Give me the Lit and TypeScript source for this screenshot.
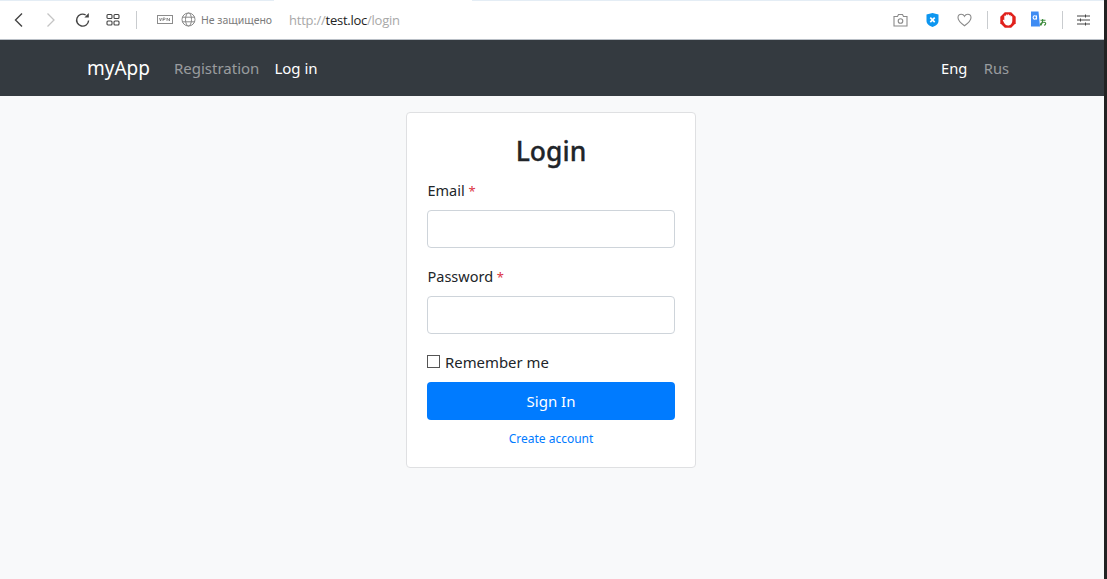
import { LitElement, html, css } from 'lit';
import { customElement } from 'lit/decorators.js';

@customElement('browser-bar')
class BrowserBar extends LitElement {
  static styles = css`
    :host {
      display: flex;
      align-items: center;
      height: 40px;
      box-sizing: border-box;
      background: #fff;
      border-bottom: 1px solid #b9bfc6;
      position: relative;
      font-family: "Noto Sans", sans-serif;
    }
    .tabline {
      position: absolute;
      left: 0;
      top: 0;
      right: 0;
      height: 1px;
      background: #e4edf5;
    }
    .tabgap {
      position: absolute;
      left: 274px;
      top: 0;
      width: 198px;
      height: 1px;
      background: #fff;
    }
    svg {
      display: block;
      flex: none;
    }
    .left {
      display: flex;
      align-items: center;
      padding-left: 10px;
    }
    .sep {
      width: 1px;
      height: 18px;
      background: #c9cccf;
      flex: none;
    }
    .secure {
      font-size: 10.5px;
      color: #7b7b7b;
      margin-left: 5px;
      white-space: nowrap;
    }
    .url {
      font-size: 13px;
      color: #a8a8a8;
      margin-left: 17px;
      white-space: nowrap;
      font-family: "Open Sans", sans-serif;
      letter-spacing: -0.25px;
    }
    .url b {
      font-weight: 400;
      color: #222;
    }
    .right {
      margin-left: auto;
      display: flex;
      align-items: center;
      padding-right: 14.5px;
    }
  `;

  render() {
    return html`
      <div class="tabline"></div>
      <div class="tabgap"></div>
      <div class="left">
        <svg width="16" height="16" viewBox="0 0 16 16" fill="none" stroke="#444" stroke-width="1.4"><path d="M12 1.5 5.5 8l6.5 6.5"/></svg>
        <svg style="margin-left:17px" width="16" height="16" viewBox="0 0 16 16" fill="none" stroke="#c4c4c4" stroke-width="1.3"><path d="M4.5 1.5 11 8l-6.500 6.500"/></svg>
        <svg style="margin-left:16px" width="16" height="16" viewBox="0 0 16 16" fill="none" stroke="#444" stroke-width="1.400"><path d="M13.600 8.500A6 6 0 1 1 10.700 3"/><path d="M13.800 1v4.400H9.400" fill="#444" stroke="none"/></svg>
        <svg style="margin-left:15px" width="14" height="14" viewBox="0 0 14 14" fill="none" stroke="#444" stroke-width="1.100"><rect x="1" y="1.500" width="5" height="4" rx="1"/><rect x="8" y="1.500" width="5" height="4" rx="1"/><rect x="1" y="8" width="5" height="4" rx="1"/><rect x="8" y="8" width="5" height="4" rx="1"/></svg>
        <div class="sep" style="margin-left:16px"></div>
        <svg style="margin-left:20px" width="16" height="10" viewBox="0 0 16 10"><rect x=".5" y=".5" width="15" height="8" fill="none" stroke="#8c8c8c"/><path d="M2.500 3l1 3 1-3M6 6V3h1.500a.7.700 0 0 1 0 1.500H6M10 6V3l2.500 3V3" fill="none" stroke="#777" stroke-width=".8"/></svg>
        <svg style="margin-left:8px" width="15" height="15" viewBox="0 0 15 15" fill="none" stroke="#8a8a8a"><circle cx="7.500" cy="7.500" r="6.500"/><ellipse cx="7.500" cy="7.500" rx="3" ry="6.500"/><path d="M1 5.200h13M1 9.800h13"/></svg>
        <span class="secure">Не защищено</span>
        <span class="url">http://<b>test.loc</b>/login</span>
      </div>
      <div class="right">
        <svg width="15" height="14" viewBox="0 0 15 14" fill="none" stroke="#8a8a8a" stroke-width="1.100"><path d="M1 3.500h3.500L5.500 1.500h4l1 2H14v9.500H1z"/><circle cx="7.500" cy="8" r="2.300"/></svg>
        <svg style="margin-left:18px" width="13" height="14" viewBox="0 0 13 14"><path d="M.5 1.500 6.500 0l6 1.500v6.500c0 3-3 5-6 6-3-1-6-3-6-6z" fill="#0d96f0"/><path d="M4.300 4.700l4.400 4.400m0-4.400L4.300 9.100" stroke="#fff" stroke-width="1.700"/></svg>
        <svg style="margin-left:18px" width="15" height="14" viewBox="0 0 15 14" fill="none" stroke="#8a8a8a" stroke-width="1.100"><path d="M7.500 12.800C3.500 9.800 1 7.500 1 4.700 1 2.700 2.500 1.300 4.300 1.300c1.300 0 2.500.7 3.200 2 .7-1.300 1.900-2 3.200-2C12.500 1.300 14 2.700 14 4.700c0 2.800-2.500 5.100-6.500 8.100z"/></svg>
        <div class="sep" style="margin-left:15px"></div>
        <svg style="margin-left:11.500px" width="16" height="16" viewBox="0 0 16 16"><path d="M4.800.3h6.400l4.500 4.500v6.400l-4.500 4.500H4.800L.3 11.200V4.800z" fill="#e0211c"/><path d="M2.800 8.200c.5-.7 1-.6 1.500 0V4.300c0-1 1.300-1 1.400 0 0-2.300 1.600-2.300 1.700-.5 0-2 1.700-2 1.800 0 .1-1.300 1.600-1.200 1.600.3v.7c.2-1 1.500-1 1.500.2v3.500c0 2.700-1.600 5-4.200 5-2.400 0-3.500-1.500-4.200-3z" fill="#fff"/></svg>
        <svg style="margin-left:15px" width="16" height="17" viewBox="0 0 16 17"><path d="M0 .5h7.500L9 15.500H0z" fill="#3f8cf3"/><circle cx="3.800" cy="6.500" r="1.700" fill="none" stroke="#fff" stroke-width="1.100"/><path d="M5.500 4.500v4" stroke="#fff" stroke-width="1.100"/><path d="M9.500 9.300h5M11.700 8c0 2.800-.8 5-1.600 6 -.8.500-1-.8.300-2 1.500-1.300 4.500-1 4.300.6-.1 1-1 1.500-1.700 1.600" fill="none" stroke="#3b8a3a" stroke-width="1.100"/></svg>
        <div class="sep" style="margin-left:15px"></div>
        <svg style="margin-left:14px" width="13" height="12" viewBox="0 0 13 12" stroke="#444" stroke-width="1"><path d="M0 2h13M0 6h13M0 10h13M8.500 .5v3M3.500 4.500v3M8.500 8.500v3"/></svg>
      </div>
    `;
  }
}

@customElement('app-root')
class AppRoot extends LitElement {
  static styles = css`
    :host {
      display: flex;
      height: 579px;
      overflow: hidden;
      background: #f8f9fa;
      font-family: "Noto Sans", sans-serif;
      color: #212529;
    }
    .page {
      flex: 1;
      min-width: 0;
    }
    .edge {
      width: 3px;
      background: #222;
      flex: none;
    }
    nav {
      display: flex;
      align-items: center;
      height: 56px;
      background: #343a40;
      padding: 0 95px 0 87px;
      font-size: 15px;
    }
    .brand {
      font-size: 19px;
      color: #fff;
      margin-right: 24px;
    }
    nav a {
      color: rgba(255, 255, 255, 0.5);
      margin-right: 15px;
    }
    nav a.on {
      color: #fff;
    }
    nav .langs {
      margin-left: auto;
      display: flex;
      font-size: 14.7px;
    }
    nav .langs a {
      margin-right: 16.500px;
    }
    nav .langs a:last-child {
      margin-right: 0;
    }
    main {
      display: flex;
      justify-content: center;
      padding: 16px 2px 0 0;
    }
    .card {
      box-sizing: border-box;
      width: 290px;
      height: 356px;
      background: #fff;
      border: 1px solid #dfe0e2;
      border-radius: 4px;
      padding: 20px;
    }
    h1 {
      margin: 0 0 9px;
      font-size: 26.5px;
      font-weight: 500;
      line-height: 36px;
      text-align: center;
      -webkit-text-stroke: 0.3px #212529;
    }
    label {
      display: block;
      font-size: 14.5px;
      line-height: 24px;
      margin-bottom: 8px;
      padding-left: 0.5px;
    }
    label i {
      font-style: normal;
      font-size: 13px;
      line-height: 1;
      color: #dc3545;
    }
    .input {
      box-sizing: border-box;
      height: 38px;
      border: 1px solid #ced4da;
      border-radius: 4px;
      background: #fff;
      margin-bottom: 16px;
    }
    .check {
      display: flex;
      align-items: center;
      gap: 5px;
      font-size: 14.9px;
      line-height: 24px;
      margin-bottom: 8px;
    }
    .box {
      box-sizing: border-box;
      width: 13px;
      height: 13px;
      margin-top: -2px;
      border: 1px solid #555;
    }
    .btn {
      height: 38px;
      background: #007bff;
      color: #fff;
      border-radius: 4px;
      display: flex;
      align-items: center;
      justify-content: center;
      font-size: 15px;
    }
    .create {
      display: block;
      text-align: center;
      font-size: 12px;
      line-height: 18px;
      color: #007bff;
      margin-top: 10px;
    }
  `;

  render() {
    return html`
      <div class="page">
        <browser-bar></browser-bar>
        <nav>
          <span class="brand">myApp</span>
          <a>Registration</a>
          <a class="on">Log in</a>
          <div class="langs"><a class="on">Eng</a><a>Rus</a></div>
        </nav>
        <main>
          <div class="card">
            <h1>Login</h1>
            <label>Email <i>*</i></label>
            <div class="input"></div>
            <label>Password <i>*</i></label>
            <div class="input"></div>
            <div class="check"><span class="box"></span>Remember me</div>
            <div class="btn">Sign In</div>
            <a class="create">Create account</a>
          </div>
        </main>
      </div>
      <div class="edge"></div>
    `;
  }
}
